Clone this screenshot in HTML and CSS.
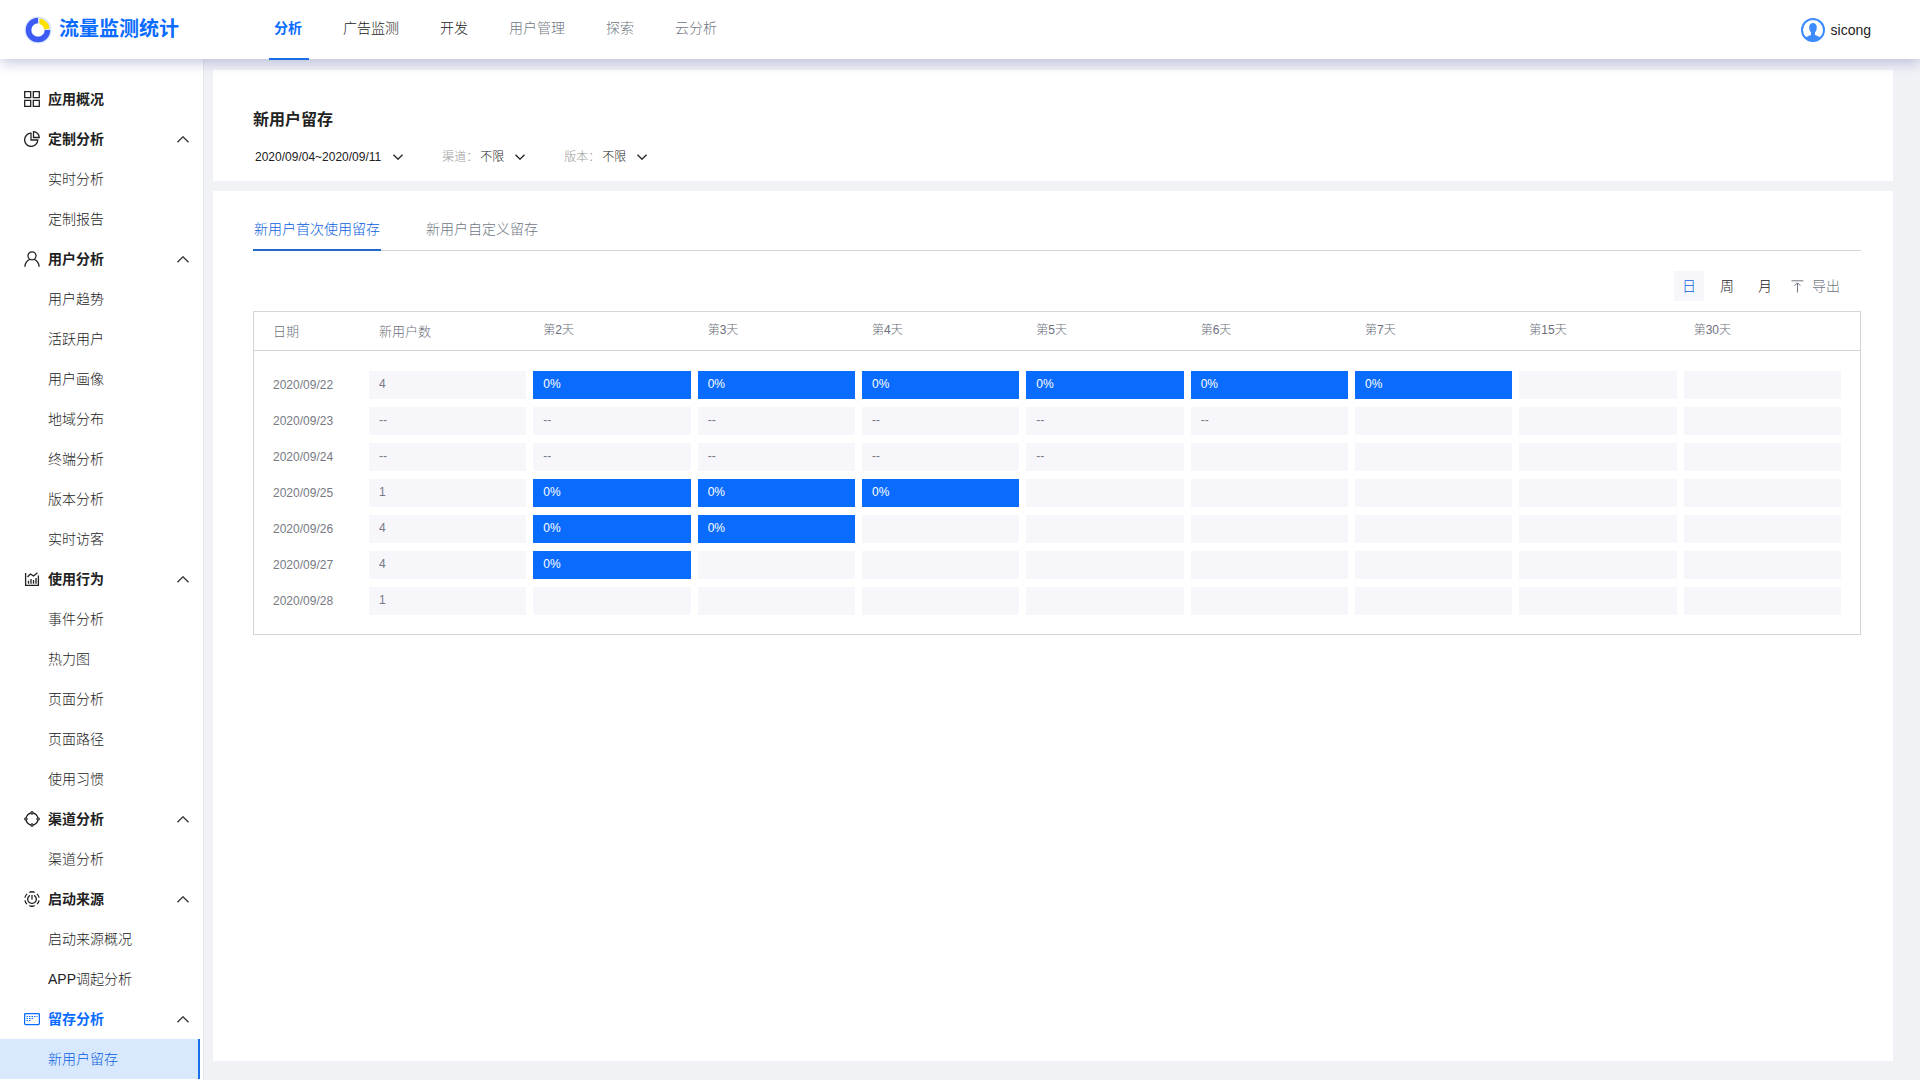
FILE: index.html
```html
<!DOCTYPE html>
<html lang="zh-CN">
<head>
<meta charset="utf-8">
<title>新用户留存 - 流量监测统计</title>
<meta name="viewport" content="width=device-width, initial-scale=1">
<link rel="stylesheet" href="styles.css">
</head>
<body>
<svg class="sprite" aria-hidden="true">
  <symbol id="down" viewBox="0 0 10 6"><path d="M.5.7 5 5.200 9.500.7"/></symbol>
  <symbol id="up" viewBox="0 0 12 7"><path d="M.5 6.200 6 .8l5.500 5.400"/></symbol>
</svg>
<header class="header">
  <a class="brand" href="#">
    <svg class="brand-mark" viewBox="0 0 28 28" aria-hidden="true">
      <circle cx="14" cy="14" r="13.500" fill="#d5e3fd"/>
      <circle cx="14" cy="14" r="6.500" fill="#fff"/>
      <path d="M14 4.500A9.500 9.500 0 1 0 23.500 14" fill="none" stroke="#3d5af5" stroke-width="5.500"/>
      <path d="M15.500 2.400A11.700 11.700 0 0 1 25.700 12.500l-5.600 1A6.500 6.500 0 0 0 15.500 8z" fill="#ffe100"/>
    </svg>
    <span>流量监测统计</span>
  </a>
  <nav class="nav" aria-label="主导航">
    <a class="nav-link is-active" href="#">分析</a>
    <a class="nav-link" href="#">广告监测</a>
    <a class="nav-link" href="#">开发</a>
    <a class="nav-link is-muted" href="#">用户管理</a>
    <a class="nav-link is-muted" href="#">探索</a>
    <a class="nav-link is-muted" href="#">云分析</a>
  </nav>
  <a class="user" href="#">
    <svg class="avatar" viewBox="0 0 24 24" aria-hidden="true">
      <circle cx="12" cy="12" r="11" fill="#fff" stroke="#3d8bfd" stroke-width="2"/>
      <path d="M8.200 9.500C8.200 6.600 9.800 5 12 5s3.800 1.600 3.800 4.500c0 2-.7 3.800-1.800 4.800v2.200c.2 1.100 3.500 1.400 6.200 3.500A11.500 11.500 0 0 1 3.800 20c2.700-2.100 6-2.400 6.200-3.500v-2.200c-1.100-1-1.800-2.800-1.800-4.800z" fill="#3d8bfd"/>
    </svg>
    <span>sicong</span>
  </a>
</header>
<div class="layout">
  <aside class="sidebar">
    <nav class="menu" aria-label="侧边导航">
      <a class="menu-head" href="#">
        <svg class="menu-icon" viewBox="0 0 16 16"><path d="M.7.7h6v6h-6zM9.300.7h6v6h-6zM.7 9.300h6v6h-6zM9.300 9.300h6v6h-6z"/></svg>
        <span>应用概况</span>
      </a>
      <button class="menu-head" type="button">
        <svg class="menu-icon" viewBox="0 0 16 16"><path d="M7 2.200A6.600 6.600 0 1 0 13.800 9H7zM9.500.7v5.800h5.800A5.900 5.900 0 0 0 9.500.7z"/></svg>
        <span>定制分析</span><svg class="arrow-up"><use href="#up"/></svg>
      </button>
      <a class="menu-item" href="#">实时分析</a>
      <a class="menu-item" href="#">定制报告</a>
      <button class="menu-head" type="button">
        <svg class="menu-icon" viewBox="0 0 16 16"><circle cx="8" cy="4.800" r="4"/><path d="M.8 15.700C1.200 12 3 9.600 5.800 8.400M15.200 15.700c-.4-3.700-2.200-6.100-5-7.300"/></svg>
        <span>用户分析</span><svg class="arrow-up"><use href="#up"/></svg>
      </button>
      <a class="menu-item" href="#">用户趋势</a>
      <a class="menu-item" href="#">活跃用户</a>
      <a class="menu-item" href="#">用户画像</a>
      <a class="menu-item" href="#">地域分布</a>
      <a class="menu-item" href="#">终端分析</a>
      <a class="menu-item" href="#">版本分析</a>
      <a class="menu-item" href="#">实时访客</a>
      <button class="menu-head" type="button">
        <svg class="menu-icon" viewBox="0 0 16 16" stroke-linejoin="round"><path d="M1.600 2v12.400h12.800V4.500M3.500 6l3-3 3 2 4-3.200M4.500 12.800V9.800M7 12.800V8M9.500 12.800V9M12 12.800V7"/></svg>
        <span>使用行为</span><svg class="arrow-up"><use href="#up"/></svg>
      </button>
      <a class="menu-item" href="#">事件分析</a>
      <a class="menu-item" href="#">热力图</a>
      <a class="menu-item" href="#">页面分析</a>
      <a class="menu-item" href="#">页面路径</a>
      <a class="menu-item" href="#">使用习惯</a>
      <button class="menu-head" type="button">
        <svg class="menu-icon" viewBox="0 0 16 16"><circle cx="8" cy="8" r="6"/><g fill="#777" stroke-width=".8"><circle cx="8" cy="1.900" r="1.400"/><circle cx="8" cy="14.100" r="1.400"/><circle cx="1.900" cy="8" r="1.400"/><circle cx="14.100" cy="8" r="1.400"/></g></svg>
        <span>渠道分析</span><svg class="arrow-up"><use href="#up"/></svg>
      </button>
      <a class="menu-item" href="#">渠道分析</a>
      <button class="menu-head" type="button">
        <svg class="menu-icon" viewBox="0 0 16 16"><path d="M.9 6.700A7.200 7.200 0 0 1 3 2.900M5.300 1.300a7.200 7.200 0 0 1 5.400 0M13 2.900a7.200 7.200 0 0 1 2.100 3.800M15.100 9.300a7.200 7.200 0 0 1-2.100 3.800M10.700 14.700a7.200 7.200 0 0 1-5.400 0M3 13.100A7.200 7.200 0 0 1 .9 9.300M8 4v4.500M6 4.300a4.300 4.300 0 1 0 4 0"/></svg>
        <span>启动来源</span><svg class="arrow-up"><use href="#up"/></svg>
      </button>
      <a class="menu-item" href="#">启动来源概况</a>
      <a class="menu-item" href="#">APP调起分析</a>
      <button class="menu-head is-active" type="button">
        <svg class="menu-icon" viewBox="0 0 16 16"><rect x=".6" y="2.600" width="14.800" height="11" rx="1"/><path d="M2.500 5.500h11M2.500 7.500h7M2.500 9.500h4" stroke-width="1" stroke-dasharray="1.500 1"/></svg>
        <span>留存分析</span><svg class="arrow-up"><use href="#up"/></svg>
      </button>
      <a class="menu-item is-current" href="#" aria-current="page">新用户留存</a>
    </nav>
  </aside>
  <main class="main">
    <section class="card filters-card">
      <h1 class="title">新用户留存</h1>
      <div class="filters">
        <button class="date-range" type="button">2020/09/04~2020/09/11<svg class="arrow-down"><use href="#down"/></svg></button>
        <div class="filter">
          <label for="channel">渠道：</label>
          <div class="select"><select id="channel"><option>不限</option></select><svg class="arrow-down"><use href="#down"/></svg></div>
        </div>
        <div class="filter">
          <label for="version">版本：</label>
          <div class="select"><select id="version"><option>不限</option></select><svg class="arrow-down"><use href="#down"/></svg></div>
        </div>
      </div>
    </section>
    <section class="card report">
      <div class="tabs" role="tablist">
        <button class="tab is-active" type="button" role="tab" aria-selected="true">新用户首次使用留存</button>
        <button class="tab" type="button" role="tab" aria-selected="false">新用户自定义留存</button>
      </div>
      <div class="toolbar">
        <button class="period is-active" type="button">日</button>
        <button class="period" type="button">周</button>
        <button class="period" type="button">月</button>
        <button class="export" type="button">
          <svg class="export-icon" viewBox="0 0 13 13" aria-hidden="true"><path d="M.5.8h12M6.500 12.500V3M3.500 5.800l3-3 3 3"/></svg>导出
        </button>
      </div>
      <div class="table-box">
        <table class="table">
          <colgroup><col class="col-date"><col span="9"><col class="col-end"></colgroup>
          <thead>
            <tr><th class="lead first">日期</th><th class="lead">新用户数</th><th>第2天</th><th>第3天</th><th>第4天</th><th>第5天</th><th>第6天</th><th>第7天</th><th>第15天</th><th>第30天</th><td></td></tr>
          </thead>
          <tbody>
            <tr><th>2020/09/22</th><td><span>4</span></td><td><span class="hit">0%</span></td><td><span class="hit">0%</span></td><td><span class="hit">0%</span></td><td><span class="hit">0%</span></td><td><span class="hit">0%</span></td><td><span class="hit">0%</span></td><td><span></span></td><td><span></span></td></tr>
            <tr><th>2020/09/23</th><td><span>--</span></td><td><span>--</span></td><td><span>--</span></td><td><span>--</span></td><td><span>--</span></td><td><span>--</span></td><td><span></span></td><td><span></span></td><td><span></span></td></tr>
            <tr><th>2020/09/24</th><td><span>--</span></td><td><span>--</span></td><td><span>--</span></td><td><span>--</span></td><td><span>--</span></td><td><span></span></td><td><span></span></td><td><span></span></td><td><span></span></td></tr>
            <tr><th>2020/09/25</th><td><span>1</span></td><td><span class="hit">0%</span></td><td><span class="hit">0%</span></td><td><span class="hit">0%</span></td><td><span></span></td><td><span></span></td><td><span></span></td><td><span></span></td><td><span></span></td></tr>
            <tr><th>2020/09/26</th><td><span>4</span></td><td><span class="hit">0%</span></td><td><span class="hit">0%</span></td><td><span></span></td><td><span></span></td><td><span></span></td><td><span></span></td><td><span></span></td><td><span></span></td></tr>
            <tr><th>2020/09/27</th><td><span>4</span></td><td><span class="hit">0%</span></td><td><span></span></td><td><span></span></td><td><span></span></td><td><span></span></td><td><span></span></td><td><span></span></td><td><span></span></td></tr>
            <tr><th>2020/09/28</th><td><span>1</span></td><td><span></span></td><td><span></span></td><td><span></span></td><td><span></span></td><td><span></span></td><td><span></span></td><td><span></span></td><td><span></span></td></tr>
          </tbody>
        </table>
      </div>
    </section>
  </main>
</div>
</body>
</html>
```
FILE: styles.css
```css
* { box-sizing: border-box; }

body {
  display: flex;
  flex-direction: column;
  min-height: 100vh;
  margin: 0;
  background: #f0f2f6;
  color: #222;
  font: 300 14px/20px "Liberation Sans", "Noto Sans CJK SC", sans-serif;
}

a { color: inherit; text-decoration: none; }

button, select {
  margin: 0;
  padding: 0;
  border: 0;
  background: none;
  color: inherit;
  font: inherit;
  cursor: pointer;
}

svg { flex: none; fill: none; stroke: currentColor; }
.brand-mark, .avatar { stroke: none; }
.sprite { position: absolute; width: 0; height: 0; }

/* Header */
.header {
  position: relative;
  z-index: 1;
  display: flex;
  height: 59px;
  padding: 0 49px 0 24px;
  background: #fff;
  box-shadow: 0 4px 12px rgba(70, 80, 160, .3);
}

.brand {
  display: flex;
  align-items: center;
  gap: 7px;
  width: 245px;
  color: #0a6cff;
  font-size: 20px;
  font-weight: 700;
}

.brand span { padding-bottom: 2px; }
.brand-mark { width: 28px; height: 28px; }

.nav { display: flex; gap: 29px; }

.nav-link {
  height: 60px;
  padding: 18px 7px 0 5px;
  border-bottom: 2px solid transparent;
}

.nav-link.is-muted { color: #717784; }

.nav-link.is-active {
  border-color: #1a6fe8;
  color: #0a6cff;
  font-weight: 700;
}

.user {
  display: flex;
  align-items: center;
  gap: 6px;
  margin-left: auto;
}

.avatar { width: 24px; height: 24px; }

/* Sidebar */
.layout { display: flex; flex: 1; }

.sidebar {
  flex: none;
  width: 204px;
  padding: 20px 3px 0 0;
  border-right: 1px solid #e3e6ea;
  background: #fff;
}

.menu { display: flex; flex-direction: column; }

.menu-head, .menu-item {
  display: flex;
  align-items: center;
  height: 40px;
}

.menu-head {
  gap: 8px;
  padding: 0 11px 0 24px;
  font-weight: 700;
}

.menu-head.is-active { color: #0a6cff; }
.menu-icon { width: 16px; height: 16px; stroke-width: 1.3; }

.arrow-up {
  width: 12px;
  height: 7px;
  margin-left: auto;
  color: #333;
  stroke-width: 1.3;
}

.menu-item {
  padding-left: 48px;
  border-right: 2px solid transparent;
}

.menu-item.is-current {
  border-color: #1a6fe8;
  background: #d9e9fd;
  color: #0a60e0;
}

/* Content */
.main {
  display: flex;
  flex: 1;
  flex-direction: column;
  gap: 10px;
  min-width: 0;
  padding: 11px 27px 19px 9px;
}

.card { padding: 0 32px 0 40px; background: #fff; }
.filters-card { padding-top: 40px; padding-bottom: 14px; }
.report { flex: 1; padding-top: 18px; }

.title { margin: 0; font-size: 16px; line-height: 20px; }

.filters {
  display: flex;
  gap: 39px;
  margin-top: 17px;
  font-size: 12px;
}

.date-range {
  display: flex;
  align-items: center;
  gap: 12px;
  padding-left: 2px;
}

.filter { display: flex; gap: 2px; }
.filter label { color: #999; }
.select { display: grid; align-items: center; }
.select > * { grid-area: 1 / 1; }
.select select { width: 45px; appearance: none; }
.arrow-down { width: 10px; height: 6px; stroke-width: 1.3; }
.select .arrow-down { justify-self: end; pointer-events: none; }

.tabs {
  display: flex;
  gap: 44px;
  height: 42px;
  border-bottom: 1px solid #d3d5d9;
}

.tab {
  height: 42px;
  padding: 0 1px;
  border-bottom: 2px solid transparent;
  color: #717784;
}

.tab.is-active { border-color: #2468c8; color: #0a60e0; }

.toolbar {
  display: flex;
  justify-content: flex-end;
  gap: 8px;
  padding: 20px 21px 10px 0;
}

.period { width: 30px; height: 30px; }
.period.is-active { background: #f6f6fb; color: #0a60e0; }

.export {
  display: flex;
  align-items: center;
  gap: 8px;
  padding-left: 3px;
  color: #717784;
}

.export-icon { width: 13px; height: 13px; }

/* Retention table */
.table-box { padding-bottom: 11px; border: 1px solid #d3d5d9; }

.table {
  width: 100%;
  border-spacing: 0;
  table-layout: fixed;
  color: #777a84;
  font-size: 12px;
}

.col-date { width: 111px; }
.col-end { width: 16px; }
.table th { font-weight: inherit; text-align: left; }

.table thead th, .table thead td {
  height: 39px;
  padding: 0 0 2px 14px;
  border-bottom: 1px solid #d3d5d9;
  color: #6b6f7a;
}

.table thead td { padding: 0; }
.table thead .lead { padding-top: 2px; padding-bottom: 0; font-size: 13px; }
.table thead .first { padding-left: 19px; }
.table tbody th { padding: 0 0 8px 19px; }
.table tbody td { padding: 0 3px 8px 4px; }
.table tbody tr:first-child > * { padding-top: 20px; }

.table span {
  display: block;
  height: 28px;
  padding-left: 10px;
  background: #f6f6fb;
  line-height: 26px;
}

.table .hit { background: #0a6cff; color: #fff; }
```
